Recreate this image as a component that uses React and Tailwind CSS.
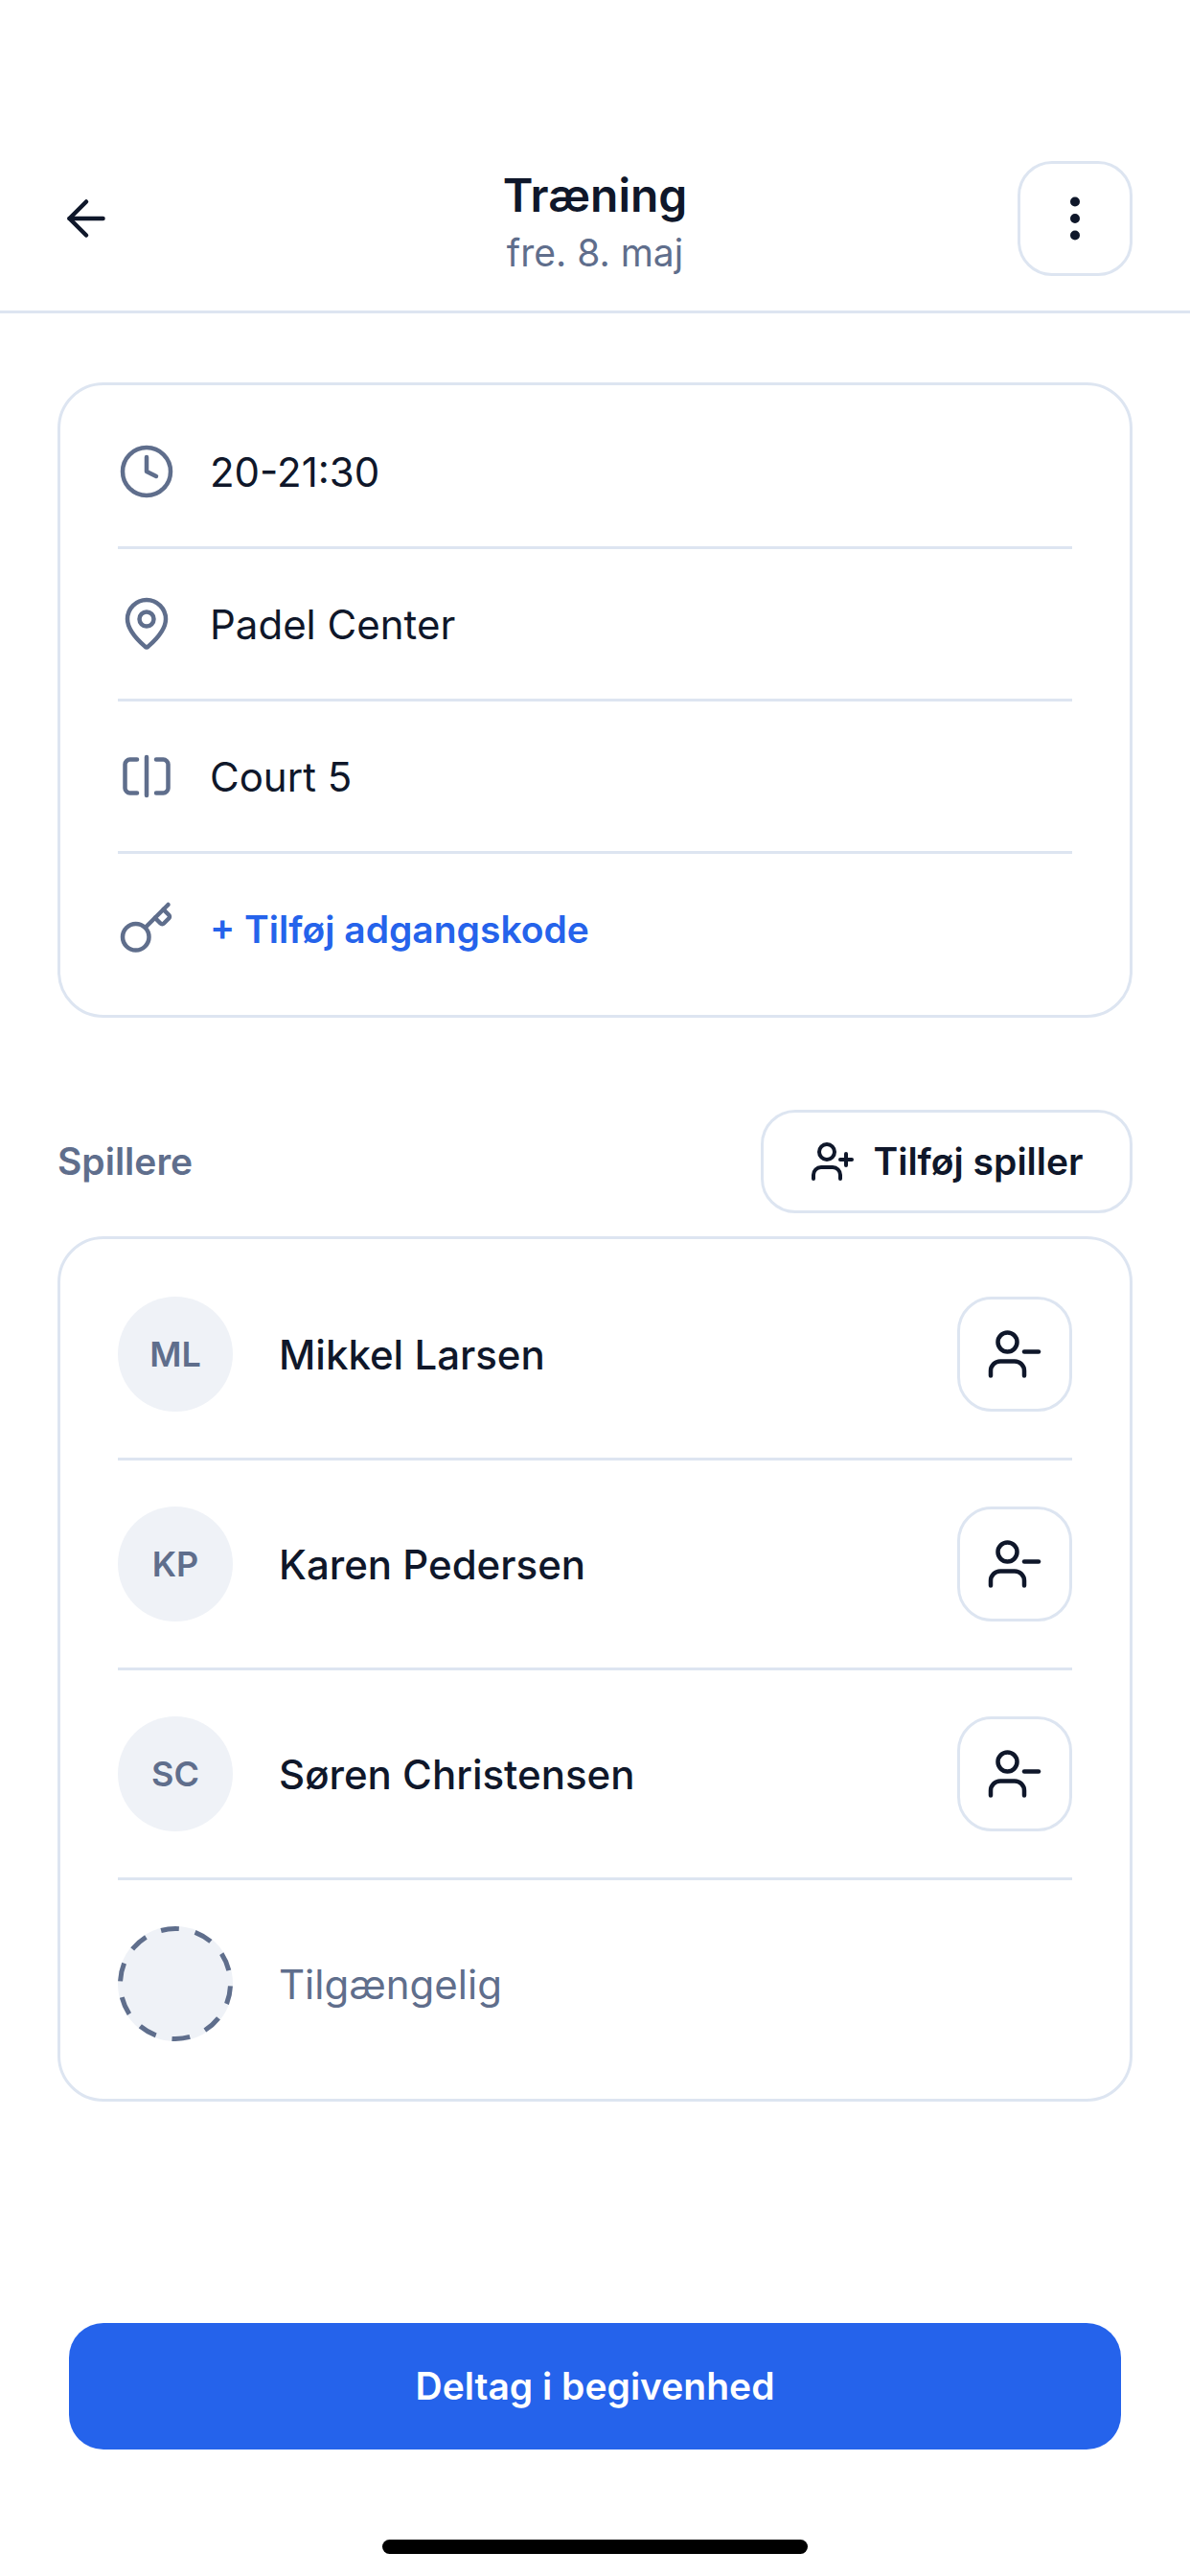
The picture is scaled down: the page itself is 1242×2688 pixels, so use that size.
import { ArrowLeft, Clock, EllipsisVertical, Key, SquareSplitHorizontal, UserMinus, UserPlus } from 'lucide-react'

const players = [
    { initials: 'ML', name: 'Mikkel Larsen' },
    { initials: 'KP', name: 'Karen Pedersen' },
    { initials: 'SC', name: 'Søren Christensen' },
]

// the pin has a sharper tip than the current lucide MapPin
function Pin(props) {
    return (
        <svg width="60" height="60" viewBox="0 0 24 24" fill="none" stroke="currentColor" strokeWidth="1.8" strokeLinecap="round" strokeLinejoin="round" {...props}>
            <path d="M20 10c0 5.2-5.6 9.9-7.4 11.5a.9.9 0 0 1-1.2 0C9.6 19.9 4 15.2 4 10a8 8 0 0 1 16 0Z" />
            <circle cx="12" cy="10" r="3" />
        </svg>
    )
}

function InfoRow({ icon: Icon, children, last }) {
    return (
        <div className={`flex h-[156px] items-center gap-[36px] ${last ? '' : 'box-content border-b-[3px] border-[#dde5f1]'}`}>
            <Icon size={60} strokeWidth={1.8} className="shrink-0 text-[#5f6e8c]" />
            {children}
        </div>
    )
}

function PlayerRow({ initials, name }) {
    return (
        <div className="flex items-center border-b-[3px] border-[#dde5f1] py-[48px]">
            <div className="flex size-[120px] shrink-0 items-center justify-center rounded-full bg-[#eff2f7] text-[36px] font-semibold text-[#5f6e8c]">
                {initials}
            </div>
            <span className="ml-[48px] flex-1 text-[42px] font-medium text-[#0f172a]">{name}</span>
            <button className="flex size-[120px] items-center justify-center rounded-[36px] border-[3px] border-[#dde5f1] text-[#0f172a]">
                <UserMinus size={60} strokeWidth={1.8} />
            </button>
        </div>
    )
}

export default function App() {
    return (
        <div className="min-h-[2688px] bg-white font-[family-name:Inter,sans-serif]">
            {/* header */}
            <header className="flex items-center justify-between border-b-[3px] border-[#dde5f1] pt-[168px] pb-[36px] pl-[60px] pr-[60px]">
                <div className="w-[120px] text-[#0f172a]">
                    <ArrowLeft size={60} strokeWidth={1.8} />
                </div>
                <div className="flex flex-col items-center gap-[6px] pt-[6px]">
                    <h1 className="text-[48px] leading-[60px] font-semibold text-[#0f172a]">Træning</h1>
                    <p className="text-[39px] leading-[48px] text-[#5f6e8c]">fre. 8. maj</p>
                </div>
                <button className="flex size-[120px] items-center justify-center rounded-[36px] border-[3px] border-[#dde5f1] text-[#0f172a]">
                    <EllipsisVertical size={60} strokeWidth={2} />
                </button>
            </header>

            <main className="px-[60px]">
                {/* event details */}
                <section className="mt-[72px] rounded-[48px] border-[3px] border-[#dde5f1] px-[60px] py-[12px]">
                    <InfoRow icon={Clock}>
                        <span className="text-[42px] text-[#0f172a]">20-21:30</span>
                    </InfoRow>
                    <InfoRow icon={Pin}>
                        <span className="text-[42px] text-[#0f172a]">Padel Center</span>
                    </InfoRow>
                    <InfoRow icon={SquareSplitHorizontal}>
                        <span className="text-[42px] text-[#0f172a]">Court 5</span>
                    </InfoRow>
                    <InfoRow icon={Key} last>
                        <span className="pt-[2px] text-[39px] font-semibold text-[#2563eb]">+ Tilføj adgangskode</span>
                    </InfoRow>
                </section>

                {/* players */}
                <div className="mt-[96px] mb-[24px] flex items-center justify-between">
                    <h2 className="text-[39px] font-semibold text-[#5f6e8c]">Spillere</h2>
                    <button className="flex h-[108px] w-[388px] items-center justify-center gap-[18px] rounded-[36px] border-[3px] border-[#dde5f1] text-[39px] font-semibold text-[#0f172a]">
                        <UserPlus size={48} strokeWidth={2} />
                        Tilføj spiller
                    </button>
                </div>

                <section className="rounded-[48px] border-[3px] border-[#dde5f1] px-[60px] py-[12px]">
                    {players.map((p) => (
                        <PlayerRow key={p.initials} {...p} />
                    ))}
                    <div className="flex items-center py-[48px]">
                        <svg width="120" height="120" viewBox="0 0 120 120" className="shrink-0">
                            <circle cx="60" cy="60" r="60" fill="#eff2f7" />
                            <circle cx="60" cy="60" r="57.5" fill="none" stroke="#5f6e8c" strokeWidth="5" strokeDasharray="19 17.13" strokeDashoffset="-2.5" />
                        </svg>
                        <span className="ml-[48px] text-[42px] text-[#5f6e8c]">Tilgængelig</span>
                    </div>
                </section>

                <button className="mx-[12px] mt-[231px] block h-[132px] w-[1098px] rounded-[36px] bg-[#2563eb] text-[39px] font-semibold text-white">
                    Deltag i begivenhed
                </button>
            </main>

            {/* home indicator */}
            <div className="mx-auto mt-[94px] h-[15px] w-[444px] rounded-full bg-black" />
        </div>
    )
}
